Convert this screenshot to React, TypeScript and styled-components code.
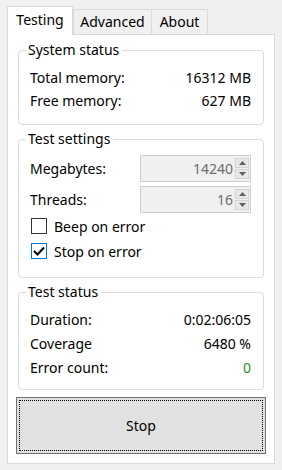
import React from 'react';
import styled, { createGlobalStyle } from 'styled-components';

const GlobalStyle = createGlobalStyle`
  html, body {
    margin: 0;
    padding: 0;
    background: #f0f0f0;
  }
  body {
    font-family: "Noto Sans", "Open Sans", sans-serif;
    font-size: 14px;
    color: #000;
  }
`;

const Window = styled.div`
  width: 282px;
  height: 470px;
  box-sizing: border-box;
  padding: 6px 7px 6px 7px;
  display: flex;
  flex-direction: column;
`;

const TabStrip = styled.div`
  display: flex;
  align-items: flex-end;
  height: 28px;
  flex-shrink: 0;
  position: relative;
  z-index: 1;
`;

const Tab = styled.div<{ $active?: boolean; $width: number }>`
  box-sizing: border-box;
  width: ${(p) => p.$width}px;
  height: ${(p) => (p.$active ? 29 : 25)}px;
  margin-bottom: ${(p) => (p.$active ? -1 : 0)}px;
  margin-right: ${(p) => (p.$active ? 0 : -1)}px;
  border: 1px solid #d9d9d9;
  border-bottom: none;
  background: ${(p) => (p.$active ? '#fff' : '#f0f0f0')};
  display: flex;
  align-items: center;
  justify-content: center;
  padding-bottom: ${(p) => (p.$active ? 2 : 0)}px;
  line-height: 20px;
`;

const Pane = styled.div`
  flex: 1;
  box-sizing: border-box;
  border: 1px solid #d9d9d9;
  background: #fff;
  padding: 5px 10px 0 10px;
  display: flex;
  flex-direction: column;
`;

const Group = styled.fieldset<{ $top?: number; $padTop: number; $padBottom: number }>`
  margin: ${(p) => p.$top ?? 0}px 0 0 0;
  padding: ${(p) => p.$padTop}px 0 ${(p) => p.$padBottom}px 0;
  border: 1px solid #dcdcdc;
  border-radius: 4px;
  min-width: 0;
`;

const Legend = styled.legend`
  margin-left: 7px;
  padding: 0 3px 0 2px;
  line-height: 20px;
`;

const Row = styled.div<{ $height: number }>`
  height: ${(p) => p.$height}px;
  display: flex;
  align-items: center;
  justify-content: space-between;
  padding: 0 12px 0 11px;
`;

const Value = styled.span<{ $color?: string }>`
  color: ${(p) => p.$color ?? '#000'};
`;

const Stack = styled.div<{ $gap: number }>`
  display: flex;
  flex-direction: column;
  gap: ${(p) => p.$gap}px;
`;

const SpinBox = styled.div`
  box-sizing: border-box;
  width: 111px;
  height: 27px;
  border: 1px solid #cccccc;
  background: #f0f0f0;
  display: flex;
  align-items: stretch;
`;

const SpinValue = styled.div`
  flex: 1;
  display: flex;
  align-items: center;
  justify-content: flex-end;
  padding-right: 2px;
  color: #6d6d6d;
`;

const SpinButtons = styled.div`
  width: 14px;
  display: flex;
  flex-direction: column;
  padding: 2px 1px 2px 0;
  gap: 1px;
`;

const SpinButton = styled.div`
  flex: 1;
  display: flex;
  align-items: center;
  justify-content: center;
  background: #e8e8e8;
  border: 1px solid #d4d4d4;
`;

const CheckRow = styled.label`
  height: 24px;
  display: flex;
  align-items: center;
  gap: 7px;
  padding-left: 12px;
`;

const Box = styled.span<{ $checked?: boolean }>`
  box-sizing: border-box;
  width: 16px;
  height: 16px;
  border: 1px solid ${(p) => (p.$checked ? '#0078d7' : '#333')};
  background: #fff;
  display: flex;
  align-items: center;
  justify-content: center;
`;

const StopButton = styled.button`
  margin: 7px -2px 0 -2px;
  height: 57px;
  box-sizing: border-box;
  border: 1px solid #707070;
  background: #e1e1e1;
  font: inherit;
  color: #000;
  outline: 1px dotted #000;
  outline-offset: -4px;
  padding: 0;
`;

function Arrow({ up }: { up?: boolean }) {
  return (
    <svg width="7" height="4" viewBox="0 0 7 4">
      <path d={up ? 'M0 4 L3.5 0 L7 4 Z' : 'M0 0 L3.5 4 L7 0 Z'} fill="#606060" />
    </svg>
  );
}

function Spin({ value }: { value: number }) {
  return (
    <SpinBox>
      <SpinValue>{value}</SpinValue>
      <SpinButtons>
        <SpinButton>
          <Arrow up />
        </SpinButton>
        <SpinButton>
          <Arrow />
        </SpinButton>
      </SpinButtons>
    </SpinBox>
  );
}

function CheckBox({ checked, label }: { checked?: boolean; label: string }) {
  return (
    <CheckRow>
      <Box $checked={checked}>
        {checked && (
          <svg width="12" height="10" viewBox="0 0 12 10">
            <path d="M1 5 L4.5 8.5 L11 1.5" stroke="#000" strokeWidth="2" fill="none" />
          </svg>
        )}
      </Box>
      {label}
    </CheckRow>
  );
}

export default function App() {
  return (
    <>
      <GlobalStyle />
      <Window>
        <TabStrip>
          <Tab $active $width={66}>Testing</Tab>
          <Tab $width={79}>Advanced</Tab>
          <Tab $width={57}>About</Tab>
        </TabStrip>
        <Pane>
          <Group $padTop={6} $padBottom={12}>
            <Legend>System status</Legend>
            <Row $height={23}>
              <span>Total memory:</span>
              <Value>16312 MB</Value>
            </Row>
            <Row $height={23}>
              <span>Free memory:</span>
              <Value>627 MB</Value>
            </Row>
          </Group>

          <Group $top={4} $padTop={6} $padBottom={14}>
            <Legend>Test settings</Legend>
            <Stack $gap={4}>
              <Row $height={27}>
                <span>Megabytes:</span>
                <Spin value={14240} />
              </Row>
              <Row $height={27}>
                <span>Threads:</span>
                <Spin value={16} />
              </Row>
            </Stack>
            <Stack $gap={1} style={{ marginTop: 1 }}>
              <CheckBox label="Beep on error" />
              <CheckBox checked label="Stop on error" />
            </Stack>
          </Group>

          <Group $top={4} $padTop={5} $padBottom={10}>
            <Legend>Test status</Legend>
            <Row $height={24}>
              <span>Duration:</span>
              <Value>0:02:06:05</Value>
            </Row>
            <Row $height={24}>
              <span>Coverage</span>
              <Value>6480 %</Value>
            </Row>
            <Row $height={24}>
              <span>Error count:</span>
              <Value $color="#2a8a2a">0</Value>
            </Row>
          </Group>

          <StopButton>Stop</StopButton>
        </Pane>
      </Window>
    </>
  );
}
